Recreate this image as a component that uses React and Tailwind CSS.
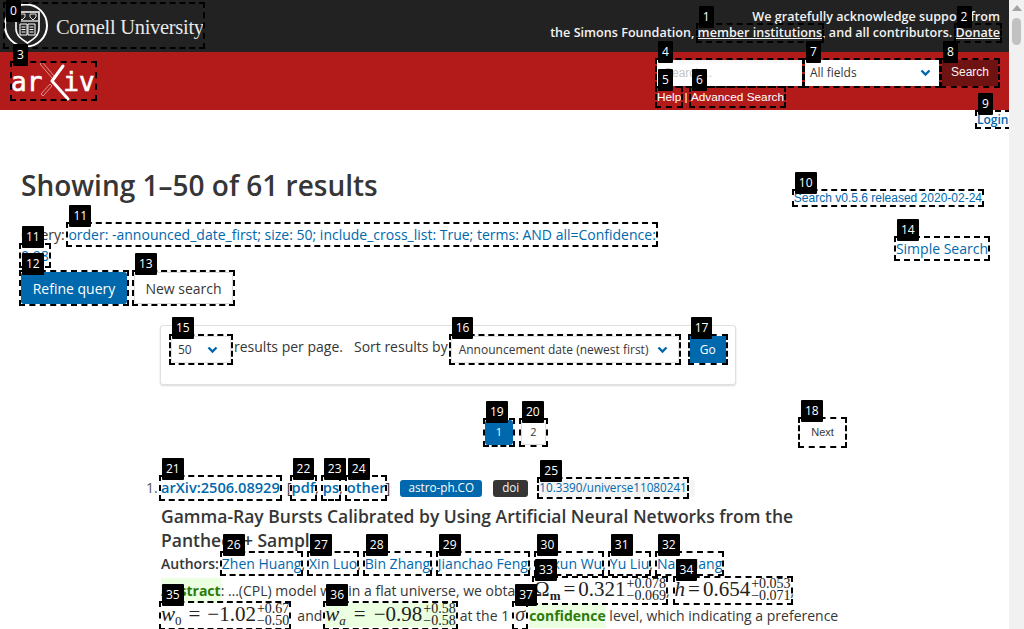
import React from "react";

const Mark = ({ n, className = "", badge = "-top-[19px]", children }) => (
  <span className={`relative inline-block ${className}`}>
    {children}
    <span className="absolute -inset-[2px] border-2 border-dashed border-black pointer-events-none" />
    <span className={`absolute left-[1px] z-10 min-w-[15px] h-[22px] px-[4px] bg-black rounded-[1px] text-white text-[12px] leading-[22px] text-center font-normal not-italic tracking-normal no-underline ${badge}`} style={{ fontFamily: "'Open Sans', sans-serif" }}>
      {n}
    </span>
  </span>
);

const Chevron = () => (
  <svg width="11" height="8" viewBox="0 0 11 8" className="shrink-0">
    <polyline points="1.5,1.5 5.5,5.500 9.5,1.5" fill="none" stroke="#0068ac" strokeWidth="2.4" />
  </svg>
);

const CornellSeal = () => (
  <svg width="46" height="46" viewBox="0 0 46 46" className="shrink-0">
    <circle cx="23" cy="22.500" r="21" fill="none" stroke="#fff" strokeWidth="2" />
    <path d="M12 8 H35 V27 C35 34 28 38 23.500 41 C19 38 12 34 12 27 Z" fill="#222" stroke="#222" strokeWidth="2" />
    <path d="M13 9 H36 V26 C36 33 29 37 24.500 40 C20 37 13 33 13 26 Z" fill="none" stroke="#fff" strokeWidth="1.6" />
    <path d="M14 18 H35" stroke="#fff" strokeWidth="1.2" />
    <path d="M16 11 H22 V14 L19 17 L16 14 Z M27 11 H33 V14 L30 17 L27 14 Z" fill="none" stroke="#ddd" strokeWidth="1" />
    <path d="M17 21 H24 V32 H17 Z M25 21 H32 V32 H25 Z" fill="none" stroke="#fff" strokeWidth="1" />
    <path d="M18.500 24 H22.500 M18.500 26.500 H22.500 M18.500 29 H22.500 M26.500 24 H30.500 M26.500 26.500 H30.500 M26.500 29 H30.500" stroke="#fff" strokeWidth="1" />
  </svg>
);

const ArxivLogo = () => (
  <div className="relative w-[85px] h-[38px] flex items-center pl-[1px] pt-[2px] font-normal text-white text-[26px] leading-none [-webkit-text-stroke:0.6px_white]" style={{ fontFamily: "'DejaVu Sans Mono', monospace" }}>
    <span>ar</span>
    <span className="ml-[21px]">iv</span>
    <svg width="40" height="40" viewBox="0 0 40 40" className="absolute left-[28px] top-0">
      <path d="M2 2 L4 0 L17 15 L15 17 Z M5 34 L3 32 L12 22 L14 24 Z" fill="none" stroke="#e8b0b0" strokeWidth="0.8" />
      <path d="M25 4 L14 19 L30 37" fill="none" stroke="#fff" strokeWidth="3" strokeLinecap="round" strokeLinejoin="round" />
    </svg>
  </div>
);

// formula em linha: lado esquerdo, valor e os limites
const Formula = ({ lhs, value, sup, sub, gap = "mx-[6px]" }) => (
  <span className="inline-flex items-center text-[21px] leading-none text-[#222]" style={{ fontFamily: "'Liberation Serif', serif" }}>
    {lhs}
    <span className={gap}>=</span>
    {value}
    <span className="inline-flex flex-col text-[14px] leading-[12px] ml-[1px]">
      <span>{sup}</span>
      <span>{sub}</span>
    </span>
  </span>
);

const App = () => {
  const autores = [
    [26, "Zhen Huang"],
    [27, "Xin Luo"],
    [28, "Bin Zhang"],
    [29, "Jianchao Feng"],
    [30, "Puxun Wu"],
    [31, "Yu Liu"],
    [32, "Nan Liang"],
  ];

  return (
    <div className="flex h-[629px] w-[1024px] overflow-hidden bg-white text-[#363636] text-[14px]" style={{ fontFamily: "'Open Sans', sans-serif" }}>
      <div className="w-[1009px] shrink-0">
        {/* top bar */}
        <header className="h-[52px] bg-[#222222] flex justify-between pr-[9px] pl-[5px]">
          <div className="mt-[4px] h-[44px]">
            <Mark n={0} badge="-top-[4px]" className="h-[43px] w-[198px]">
              <span className="flex items-center h-[44px] -ml-[2px] text-[#e8e8e8]">
                <CornellSeal />
                <span className="ml-[7px] mt-[2px] text-[20.5px] tracking-[-0.3px] whitespace-nowrap" style={{ fontFamily: "'Liberation Serif', serif" }}>
                  Cornell University
                </span>
              </span>
            </Mark>
          </div>
          <div className="text-right text-[12.6px] leading-[16px] font-semibold text-[#f2f2f2] pt-[9px]">
            <div>We gratefully acknowledge support from</div>
            <div>
              the Simons Foundation, <Mark n={1}><span className="underline">member institutions</span></Mark>, and all contributors. <Mark n={2}><span className="underline">Donate</span></Mark>
            </div>
          </div>
        </header>

        {/* red bar */}
        <div className="h-[58px] bg-[#b31b1b] flex justify-between pl-[12px] pr-[10px]">
          <div className="mt-[11px]">
            <Mark n={3} className="w-[83px] h-[36px]">
              <div className="-mt-[1px] -ml-[2px]"><ArxivLogo /></div>
            </Mark>
          </div>
          <div className="flex flex-col w-[342px] pt-[8px]" style={{ fontFamily: "'Liberation Sans', sans-serif" }}>
            <div className="flex gap-[3px] h-[26px]">
              <Mark n={4} className="w-[145px] h-[26px]">
                <input placeholder="Search..." className="w-full h-full bg-white px-[7px] text-[12px] shadow-inner placeholder:text-[#c4c4c4] outline-none" />
              </Mark>
              <Mark n={7} className="w-[134px] h-[26px]">
                <div className="w-full h-full bg-white flex items-center justify-between pl-[5px] pr-[8px] text-[12px] text-[#363636]" style={{ fontFamily: "'Open Sans', sans-serif" }}>
                  All fields <Chevron />
                </div>
              </Mark>
              <Mark n={8} className="w-[56px] h-[26px]">
                <div className="w-full h-full bg-[#6e1212] text-[#f5f5f5] text-[12px] flex items-center justify-center pb-[2px]">Search</div>
              </Mark>
            </div>
            <div className="mt-[2px] text-white text-[11.8px] leading-[18px] whitespace-nowrap">
              <Mark n={5}>Help</Mark> | <Mark n={6}>Advanced Search</Mark>
            </div>
          </div>
        </div>

        {/* login */}
        <div className="flex justify-end h-[18px] pt-[2px]">
          <Mark n={9} className="w-[32px] h-[15px]">
            <span className="block text-[12px] leading-[15px] font-semibold text-[#0068ac]">Login</span>
          </Mark>
        </div>

        {/* heading area */}
        <div className="px-[21px] relative">
          <div className="flex justify-between items-start">
            <h1 className="mt-[37px] text-[28px] leading-[40px] font-semibold text-[#363636] whitespace-nowrap">
              Showing 1–50 of 61 results
            </h1>
            <div className="mt-[63px] mr-[6px] text-[12px] leading-[14px] text-[#0068ac]" style={{ fontFamily: "'Liberation Sans', sans-serif" }}>
              <Mark n={10}>Search v0.5.6 released 2020-02-24</Mark>
            </div>
          </div>

          <div className="flex justify-between items-start mt-[19px]">
            <div className="w-[640px] text-[14px] leading-[21px]">
              <div className="whitespace-nowrap">
                Query: <Mark n={11}><span className="text-[#0068ac]">order: -announced_date_first; size: 50; include_cross_list: True; terms: AND all=Confidence:</span></Mark>
              </div>
              <div className="h-[21px]">
                <Mark n={11}><span className="text-[#0068ac]">0.98</span></Mark>
              </div>
            </div>
            <div className="mt-[14px] text-[14px] leading-[21px] text-[#0068ac]">
              <Mark n={14}>Simple Search</Mark>
            </div>
          </div>

          <div className="flex gap-[7px] mt-[6px]">
            <Mark n={12}>
              <button className="block w-[106px] h-[32px] bg-[#0068ac] text-white rounded-[3px] text-[14px]">Refine query</button>
            </Mark>
            <Mark n={13}>
              <button className="block w-[99px] h-[32px] bg-white border border-[#dbdbdb] rounded-[3px] text-[14px] text-[#363636]">New search</button>
            </Mark>
          </div>
        </div>

        {/* controls */}
        <div className="ml-[160px] mt-[21px] w-[576px] h-[60px] bg-white border border-[#e0e0e0] rounded-[3px] shadow-[0_1px_2px_rgba(0,0,0,0.15)] flex items-start pt-[10px] pl-[10px] text-[14px]">
          <Mark n={15} className="w-[60px] h-[27px]">
            <div className="w-full h-full border border-[#e4e4e4] rounded-[3px] bg-white flex items-center justify-between pl-[6px] pr-[12px] text-[12px] text-[#363636]">
              50 <Chevron />
            </div>
          </Mark>
          <span className="ml-[3px] leading-[21px] whitespace-nowrap">results per page.</span>
          <span className="ml-[11px] leading-[21px] whitespace-nowrap">Sort results by</span>
          <Mark n={16} className="ml-[3px] w-[228px] h-[27px]">
            <div className="w-full h-full border border-[#e4e4e4] rounded-[3px] bg-white flex items-center justify-between pl-[7px] pr-[10px] text-[12px] text-[#363636] whitespace-nowrap">
              Announcement date (newest first) <Chevron />
            </div>
          </Mark>
          <Mark n={17} className="ml-[11px] w-[36px] h-[27px]">
            <div className="w-full h-full bg-[#0068ac] text-white text-[12px] flex items-center justify-center">Go</div>
          </Mark>
        </div>

        {/* pagination */}
        <div className="relative flex items-start h-[27px] mt-[34px] pl-[485px] text-[11px]">
          <Mark n={19} className="w-[28px] h-[25px] mt-[1px]">
            <div className="w-full h-full bg-[#0068ac] text-white rounded-[3px] flex items-center justify-center">1</div>
          </Mark>
          <Mark n={20} className="ml-[8px] w-[25px] h-[25px] mt-[1px]">
            <div className="w-full h-full border border-[#dbdbdb] rounded-[3px] flex items-center justify-center">2</div>
          </Mark>
          <Mark n={18} className="ml-[254px] w-[45px] h-[27px]">
            <div className="w-full h-full flex items-center justify-center text-[#363636]" style={{ fontFamily: "'Liberation Sans', sans-serif" }}>Next</div>
          </Mark>
        </div>

        {/* result */}
        <div className="relative ml-[161px] mt-[32px] w-[700px]">
          <span className="absolute -left-[15px] top-[0px] leading-[20px] text-[14px] text-[#555]">1.</span>
          <div className="flex items-center h-[20px] text-[14.6px] font-semibold text-[#0068ac] whitespace-nowrap">
            <Mark n={21}>arXiv:2506.08929</Mark>
            <span className="ml-[7px] text-[#363636] font-normal">[</span>
            <Mark n={22}>pdf</Mark>
            <span className="text-[#363636] font-normal mr-[4px]">,</span>
            <Mark n={23}>ps</Mark>
            <span className="text-[#363636] font-normal mr-[4px]">,</span>
            <Mark n={24}>other</Mark>
            <span className="text-[#363636] font-normal">]</span>
            <span className="ml-[10px] h-[17px] w-[82px] rounded-[3px] bg-[#0068ac] text-white text-[11.7px] font-normal flex items-center justify-center">astro-ph.CO</span>
            <span className="ml-[11px] h-[17px] w-[35px] rounded-[3px] bg-[#363636] text-[#f5f5f5] text-[11.7px] font-normal flex items-center justify-center">doi</span>
            <span className="ml-[10px] h-[17px] rounded-[3px] bg-[#f5f5f5] text-[11.7px] font-normal flex items-center pl-[1px] pr-[8px]">
              <Mark n={25}>10.3390/universe11080241</Mark>
            </span>
          </div>

          <h2 className="mt-[6px] w-[660px] text-[17.5px] leading-[24px] font-semibold text-[#363636]">
            Gamma-Ray Bursts Calibrated by Using Artificial Neural Networks from the Pantheon+ Sample
          </h2>

          <div className="h-[23px] flex items-center whitespace-nowrap text-[14px]">
            <span className="font-semibold">Authors:</span>
            <span className="ml-[3px] flex text-[#0068ac]">
              {autores.map(([n, nome], i) => (
                <span key={n} className="flex">
                  <Mark n={n}>{nome}</Mark>
                  {i < autores.length - 1 && <span className="text-[#363636] mr-[4px]">,</span>}
                </span>
              ))}
            </span>
          </div>

          <div className="mt-[3px] text-[14px] leading-[25px] whitespace-nowrap">
            <div className="flex items-center h-[25px]">
              <span className="bg-[#ebffe1] text-[#2b7a0b] font-bold">Abstract</span>
              <span>: …(CPL) model within a flat universe, we obtain&nbsp;</span>
              <Mark n={33} className="ml-[3px]"><Formula gap="mx-[3px]" lhs={<span>Ω<sub className="font-bold text-[13px]">m</sub></span>} value="0.321" sup="+0.078" sub="−0.069" /></Mark>
              <span className="mr-[5px]">,</span>
              <Mark n={34}><Formula gap="mx-[3px]" lhs={<i>h</i>} value="0.654" sup="+0.053" sub="−0.071" /></Mark>
              <span>,</span>
            </div>
            <div className="flex items-center h-[25px]">
              <Mark n={35}><Formula gap="mx-[7px]" lhs={<i>w<sub className="not-italic text-[13px]">0</sub></i>} value="−1.02" sup="+0.67" sub="−0.50" /></Mark>
              <span className="ml-[8px] mr-[3px]">and</span>
              <Mark n={36}><span className="bg-[#ebffe1] inline-flex"><Formula gap="mx-[8px]" lhs={<i>w<sub className="text-[13px]">a</sub></i>} value="−0.98" sup="+0.58" sub="−0.58" /></span></Mark>
              <span className="ml-[4px]">at the 1</span>
              <Mark n={37} className="ml-[5px] w-[12px] text-center"><i className="text-[20px] leading-[20px]" style={{ fontFamily: "'Liberation Serif', serif" }}>σ</i></Mark>
              <span className="ml-[3px] bg-[#ebffe1] text-[#2b7a0b] font-bold">confidence</span>
              <span>&nbsp;level, which indicating a preference</span>
            </div>
          </div>
        </div>
      </div>

      {/* scrollbar */}
      <div className="w-[15px] h-full bg-[#f1f1f1] relative flex flex-col items-center pt-[5px]">
        <div className="w-0 h-0 border-x-[5px] border-x-transparent border-b-[6px] border-b-[#a3a3a3]" />
        <div className="mt-[7px] w-[9px] h-[27px] rounded-full bg-[#c1c1c1]" />
      </div>
    </div>
  );
};

export default App;
